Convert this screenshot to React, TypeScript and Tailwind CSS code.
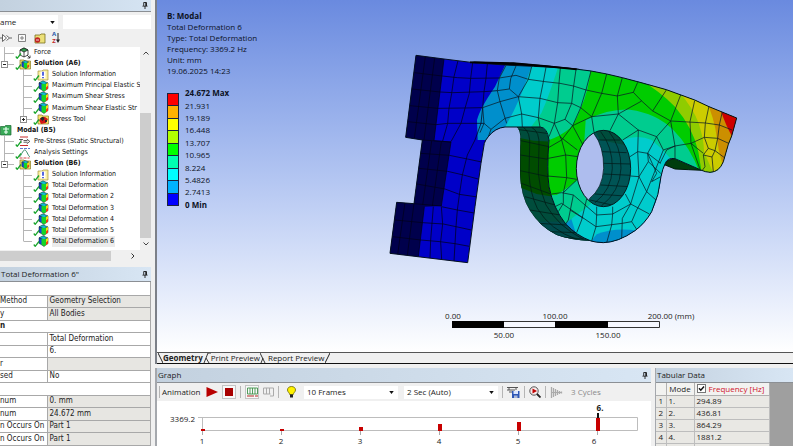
import React, { useState } from 'react';

const sans = "font-['Open_Sans','Noto_Sans',sans-serif]";

type IconKind = 'force' | 'solution' | 'info' | 'result' | 'tool' | 'modal' | 'prestress' | 'settings';

interface TreeNode {
  label: string;
  level: 0 | 1 | 2;
  icon: IconKind;
  expander?: 'open' | 'closed';
  bold?: boolean;
  selected?: boolean;
  last?: boolean;
}

const treeNodes: TreeNode[] = [
  { label: 'Force', level: 1, icon: 'force' },
  { label: 'Solution (A6)', level: 1, icon: 'solution', expander: 'open', bold: true, last: true },
  { label: 'Solution Information', level: 2, icon: 'info' },
  { label: 'Maximum Principal Elastic S', level: 2, icon: 'result' },
  { label: 'Maximum Shear Stress', level: 2, icon: 'result' },
  { label: 'Maximum Shear Elastic Str', level: 2, icon: 'result' },
  { label: 'Stress Tool', level: 2, icon: 'tool', expander: 'closed', last: true },
  { label: 'Modal (B5)', level: 0, icon: 'modal', bold: true },
  { label: 'Pre-Stress (Static Structural)', level: 1, icon: 'prestress' },
  { label: 'Analysis Settings', level: 1, icon: 'settings' },
  { label: 'Solution (B6)', level: 1, icon: 'solution', expander: 'open', bold: true, last: true },
  { label: 'Solution Information', level: 2, icon: 'info' },
  { label: 'Total Deformation', level: 2, icon: 'result' },
  { label: 'Total Deformation 2', level: 2, icon: 'result' },
  { label: 'Total Deformation 3', level: 2, icon: 'result' },
  { label: 'Total Deformation 4', level: 2, icon: 'result' },
  { label: 'Total Deformation 5', level: 2, icon: 'result' },
  { label: 'Total Deformation 6', level: 2, icon: 'result', selected: true, last: true },
];

const detailRows: { name: string; value?: string; group?: boolean; readOnly?: boolean }[] = [
  { name: '', group: true },
  { name: 'Method', value: 'Geometry Selection', readOnly: true },
  { name: 'y', value: 'All Bodies', readOnly: true },
  { name: 'n', group: true },
  { name: '', value: 'Total Deformation' },
  { name: '', value: '6.' },
  { name: 'r', value: '', readOnly: true },
  { name: 'sed', value: 'No' },
  { name: '', group: true },
  { name: 'num', value: '0. mm', readOnly: true },
  { name: 'num', value: '24.672 mm', readOnly: true },
  { name: 'n Occurs On', value: 'Part 1', readOnly: true },
  { name: 'n Occurs On', value: 'Part 1', readOnly: true },
  { name: '', group: true },
];

const legendColors = ['#ff0000', '#ffb200', '#ffff00', '#b2ff00', '#00ff00', '#00ffb2', '#00ffff', '#00b2ff', '#0000ff'];
const legendValues = ['24.672 Max', '21.931', '19.189', '16.448', '13.707', '10.965', '8.224', '5.4826', '2.7413', '0 Min'];

const modes = [
  ['1.', '294.89'],
  ['2.', '436.81'],
  ['3.', '864.29'],
  ['4.', '1881.2'],
  ['5.', '2877.8'],
];

const bars = [
  { x: 45, h: 2 },
  { x: 124, h: 2 },
  { x: 203, h: 4 },
  { x: 282, h: 7 },
  { x: 361, h: 9 },
  { x: 440, h: 13 },
];

const Pin = () => (
  <svg viewBox="0 0 7 8" className="h-[7px] w-[6px] shrink-0">
    <path d="M2 .5h3v4M2 .5v4" fill="none" stroke="#111" />
    <path d="M4 .5h1.5v4H4zM.5 4.2h6v1h-6zM3 5h1v3H3z" fill="#111" />
  </svg>
);

const Cube = ({ x = 0, y = 0, s = 1 }: { x?: number; y?: number; s?: number }) => (
  <g transform={`translate(${x} ${y}) scale(${s})`} stroke="#082018" strokeWidth=".5">
    <path d="M1 2.5 5 .5l5 2.2-4 2z" fill="#12b9cf" />
    <path d="M1 2.5 6 4.7V11L1 8z" fill="#1443d8" />
    <path d="M6 4.7l4-2v5.6L6 11z" fill="#ff9a00" />
    <path d="M3.5 3.6 8 3.7v6l-2 1.2-2.5-1.5z" fill="#16d426" stroke="none" />
    <path d="M8 3.7l2-1v3L8 7z" fill="#f2df17" stroke="none" />
    <path d="M8 7.2l2-1.4v2.5L8 9.8z" fill="#f03a12" stroke="none" />
  </g>
);

const Folder = () => <path d="M5 2h4l1 1h5.5v8H5z" fill="#f8e66a" stroke="#8a7a20" strokeWidth=".7" />;

const NodeIcon = ({ kind }: { kind: IconKind }) => (
  <svg viewBox="0 0 16 12" className="h-3 w-4 shrink-0">
    {kind === 'force' && (
      <g stroke="#222" strokeWidth=".8" fill="#fff">
        <path d="M5 3l4-2 4 2v5l-4 2-4-2z" />
        <path d="M5 3l4 2 4-2-4-2z" fill="#31a14e" />
        <path d="M9 5v5" fill="none" />
        <path d="M12 8l3 3M15 8.5V11h-2.5" fill="none" />
      </g>
    )}
    {kind === 'solution' && (
      <>
        <Folder />
        <Cube x={6} y={2} s={0.8} />
      </>
    )}
    {kind === 'info' && (
      <>
        <path d="M5 2h4l1-1h5v10H5z" fill="#f9f0a0" stroke="#a8963c" strokeWidth=".7" />
        <path d="M7.5 2.5h5v7h-5z" fill="#fff" />
        <path d="M10 2.8v4" stroke="#1b35d8" strokeWidth="1.5" />
        <path d="M10 8v1.2" stroke="#1b35d8" strokeWidth="1.5" />
      </>
    )}
    {kind === 'result' && <Cube x={5} y={0.3} />}
    {kind === 'tool' && (
      <>
        <Folder />
        <path d="M6 7l3-3h3l3 2-2 4-5 1z" fill="#d31616" />
        <path d="M7 5.5l3-2 1.5 2.5-2 2zM12 7h2v2h-2z" fill="#25262c" />
      </>
    )}
    {kind === 'modal' && (
      <>
        <path d="M2.500 2.500h4l1-1H13v9.500H2.500z" fill="#39a957" stroke="#176831" strokeWidth=".7" />
        <path d="M8 3v7M5 5h6M6 8h4" stroke="#e8fff0" strokeWidth="1.2" />
      </>
    )}
    {kind === 'prestress' && (
      <>
        <path d="M5 2h8M5 10.500h8" stroke="#c92c2c" />
        <path d="M4 4.500h4M6 4.500V8M8.500 5.500h4M8.500 7.200h4M11.800 4l3 2.400-3 2.400" fill="none" stroke="#333" strokeWidth=".8" />
      </>
    )}
    {kind === 'settings' && (
      <>
        <path d="M4.5 11h10" stroke="#c33" strokeWidth=".9" strokeDasharray="3 1" />
        <path d="M4.500 10C6 9 7.500 3.500 9.500 3S13 9 15 10" fill="none" stroke="#26805a" strokeWidth=".9" />
        <path d="M5 1.500h10" stroke="#4f6bc4" strokeWidth=".9" strokeDasharray="3 1" />
      </>
    )}
    {kind !== 'modal' && <path d="M.8 9.500 2.200 11.300 6 6.500" fill="none" stroke="#19a52c" strokeWidth="1.3" />}
  </svg>
);

const Guide = ({ node }: { node: TreeNode }) => {
  const x = node.level === 1 ? 4.5 : 23.5;
  const w = node.level === 1 ? 15 : 33;
  return (
    <svg viewBox={`0 0 ${w} 12`} width={w} height="12" className="block shrink-0">
      <path d={`M${x} 0V${node.last ? 6 : 12}M${x} 6.5H${w - 1}`} stroke="#b5b5b5" fill="none" />
      {node.expander && (
        <>
          <rect x={x - 3} y="3.5" width="6" height="6" fill="#fff" stroke="#8d8d8d" />
          <path d={`M${x - 1.5} 6.5h3${node.expander === 'closed' ? `M${x} 5v3` : ''}`} stroke="#222" />
        </>
      )}
    </svg>
  );
};

const TreeRow = ({ node }: { node: TreeNode }) => (
  <li className="flex min-h-0 items-center whitespace-nowrap">
    {node.level > 0 &&
      (node.expander ? (
        <button type="button" aria-label={node.label} className="shrink-0">
          <Guide node={node} />
        </button>
      ) : (
        <Guide node={node} />
      ))}
    <span className={node.level === 0 ? '-ml-[2px] flex' : 'flex'}>
      <NodeIcon kind={node.icon} />
    </span>
    <span className={`ml-[3px] pr-px ${node.bold ? 'font-bold' : ''} ${node.selected ? 'bg-[#ececec]' : ''}`}>{node.label}</span>
  </li>
);

const TitleBar = ({ title, pin = true }: { title: string; pin?: boolean }) => (
  <div className="flex h-[15px] shrink-0 items-center justify-between border-b border-[#8b8f94] bg-linear-to-r from-[#c3d1df] to-[#d8e6f4] pr-[3px] pl-px text-[8px] whitespace-nowrap text-[#222]">
    <span>{title}</span>
    {pin && <Pin />}
  </div>
);

const OutlinePanel = () => (
  <section className="flex flex-col">
    <div className="flex h-3 items-center justify-end border-b border-[#8b8f94] bg-linear-to-r from-[#c3d1df] to-[#d5e4f3] px-[3px] pb-px">
      <Pin />
    </div>
    <div className="flex gap-[5px] pt-[3px]">
      <label className="flex h-[14px] w-[58px] items-center justify-between bg-white pr-[3px]">
        <select aria-label="Filter" className="w-full appearance-none bg-transparent text-[8px] leading-3 text-[#222]">
          <option>ame</option>
        </select>
        <svg viewBox="0 0 6 4" className="h-[3px] w-[5px] shrink-0">
          <path d="M0 0h6L3 4z" fill="#111" />
        </svg>
      </label>
      <input aria-label="Search" className="h-[14px] min-w-0 flex-1 bg-white px-1 text-[8px]" />
    </div>
    <div className="flex h-[18px] items-center gap-[6px]">
      <button type="button" aria-label="Collapse">
        <svg viewBox="0 0 12 10" className="h-[10px] w-3">
          <path d="M0 5h3M2.500 1.500l4 3.500-4 3.500zM6.500 2.500l3 2.500-3 2.500M9.500 5H12" fill="#fff" stroke="#555" strokeWidth=".9" />
        </svg>
      </button>
      <button type="button" aria-label="Expand all">
        <svg viewBox="0 0 8 8" className="h-2 w-2">
          <path d="M.5.5h7v7h-7zM2 4h4M4 2v4" fill="#fafafa" stroke="#777" strokeWidth=".9" />
        </svg>
      </button>
      <button type="button" aria-label="Hide folders" className="ml-[2px]">
        <svg viewBox="0 0 12 11" className="h-[11px] w-3">
          <path d="M1 2h5l1-1h4v9H1z" fill="#ece078" stroke="#79701f" strokeWidth=".8" />
          <circle cx="3.500" cy="7" r="2.700" fill="#c12222" />
          <path d="M2 7h3" stroke="#fff" strokeWidth=".8" />
        </svg>
      </button>
      <button type="button" aria-label="Sort" className="flex items-center text-[6px] leading-[7px] font-bold">
        <span className="flex flex-col">
          <span className="text-[#2456a8]">A</span>
          <span className="text-[#c02424]">Z</span>
        </span>
        <svg viewBox="0 0 4 10" className="h-[10px] w-1">
          <path d="M2 0v8" stroke="#222" />
          <path d="M0 6.500h4L2 10z" fill="#222" />
        </svg>
      </button>
    </div>
    <div className="flex bg-white">
      <ul className="grid h-[203px] min-w-0 flex-1 auto-rows-fr overflow-hidden pb-[3px] font-['DejaVu_Sans_Condensed','DejaVu_Sans',sans-serif] text-[7px] leading-[11px] text-[#111]">
        {treeNodes.map((node, i) => (
          <TreeRow key={i} node={node} />
        ))}
      </ul>
      <div className="flex w-[11px] shrink-0 flex-col items-center bg-[#f0f0f0] pt-1 pb-1">
        <svg viewBox="0 0 6 4" className="h-1 w-[6px]">
          <path d="M.5 3.500 3 1l2.500 2.500" fill="none" stroke="#444" />
        </svg>
        <div className="mt-[58px] mb-1 w-full flex-1 bg-[#cdcdcd]" />
        <svg viewBox="0 0 6 4" className="h-1 w-[6px]">
          <path d="M.5.500 3 3l2.500-2.500" fill="none" stroke="#444" />
        </svg>
      </div>
    </div>
    <div className="flex h-[11px] items-center gap-5 bg-[#f0f0f0]">
      <div className="h-[10px] w-[111px] bg-[#cdcdcd]" />
      <svg viewBox="0 0 4 6" className="h-[6px] w-1">
        <path d="M.5.500 3 3 .5 5.500" fill="none" stroke="#333" />
      </svg>
    </div>
  </section>
);

const DetailsPanel = () => (
  <section className="mt-[6px] flex min-h-0 flex-1 flex-col overflow-hidden">
    <TitleBar title={'Total Deformation 6"'} />
    <table className="w-full table-fixed border-collapse bg-white font-['DejaVu_Sans_Condensed','DejaVu_Sans',sans-serif] text-[8px] leading-[10px] text-[#222]">
      <colgroup>
        <col className="w-[47px]" />
        <col />
      </colgroup>
      <tbody>
        {detailRows.map((row, i) => (
          <tr key={i} className="odd:h-[13px] even:h-3">
            <th
              colSpan={row.group ? 2 : 1}
              className={`border-r border-b border-[#a8a8a8] p-0 text-left whitespace-nowrap ${row.group ? 'font-bold' : 'font-normal'}`}
            >
              {row.name}
            </th>
            {!row.group && (
              <td className={`border-r border-b border-[#a8a8a8] p-0 pl-[2px] whitespace-nowrap ${row.readOnly ? 'bg-[#e7e6e2]' : ''}`}>
                {row.value}
              </td>
            )}
          </tr>
        ))}
      </tbody>
    </table>
  </section>
);

const facePath =
  'M108 46 192 57 280 68 375 75 460 79 540 83Q585 86 633 93 680 101 727 113L780 127 859 149 944 180 987 200 1070 234 1055 288 1045 313 1030 365Q1018 396 990 397 975 396 965 391L885 356Q862 352 855 372 848 385 843 410 838 465 815 515 795 550 765 572 715 607 670 608 645 607 633 603 590 587 557 552 520 505 507 440 500 390 507 300 502 262 480 261H375Q345 264 325 290 316 300 313 310L303 370 285 500 263 668 30 640 50 487 102 491 127 300 77 292Z';

const Mesh = ({ d, color = '#0a1a24' }: { d: string; color?: string }) => (
  <path d={d} fill="none" stroke={color} strokeWidth="2.200" strokeLinejoin="round" />
);

const Model = () => (
  <g transform="translate(380 40) scale(.33333)">
    <defs>
      <clipPath id="face">
        <path d={facePath} />
      </clipPath>
      <clipPath id="arm">
        <path d="M410 261Q424 270 421 320L420 400Q422 470 450 512 480 560 530 585 570 600 633 603L640 560 540 420 520 280 480 255Z" />
      </clipPath>
      <clipPath id="bore">
        <ellipse cx="670.500" cy="385.500" rx="81.500" ry="114.500" />
      </clipPath>
    </defs>

    {/* thickness seen behind the face */}
    <path d="M270 64 400 67 500 76 600 86 540 88 380 82Z" fill="#000" />
    <g clipPath="url(#arm)">
      <path d="M400 250H650V610H400z" fill="#004d3c" />
      <path d="M400 290 460 302 520 305V470L470 462 415 440z" fill="#004c00" />
      <path d="M470 545 560 545 640 590V610H470z" fill="#004a4c" />
      <Mesh
        color="#001a14"
        d="M410 261Q424 270 421 320L420 400Q422 470 450 512 480 560 530 585 570 600 633 603M430 262Q452 275 449 320L447 400Q450 460 472 505 510 570 590 598M455 262Q480 275 477 320L475 400Q478 450 498 495 535 560 610 598M410 268 500 280M422 302 507 320M421 345 505 358M420 392 505 410M424 430 512 462M435 470 525 495M450 510 540 525M475 550 560 555M510 575 590 578M550 592 620 598"
      />
    </g>
    <path d="M853 374 862 362 885 355 967 391 925 389 885 387Z" fill="#003d0d" stroke="#001a08" strokeWidth="3" />

    <g clipPath="url(#face)">
      <path d="M0 0H1100V700H0z" fill="#0000c8" />
      <path d="M108 46 192 57 162 302 213 306 184 498 133 500 115 650 0 640V0z" fill="#00004c" />
      <path d="M378 70 345 140Q300 205 291 240L293 300H330L600 700H1100V0H378z" fill="#008fcc" />
      <path d="M457 70Q430 155 400 215L375 262 500 300 600 620H1100V70z" fill="#00cccc" />
      <path d="M538 70Q510 160 484 220L450 265 490 310 510 600H560L555 553 585 528Q620 505 645 480L700 380 727 300Q775 282 815 300 845 325 868 352L1000 430 1100 70z" fill="#00cc8f" />
      <path d="M633 80Q628 150 600 210 590 240 570 265 540 290 500 303V466L530 465 560 445 595 418 612 320 617 240Q690 205 750 209 830 220 880 270 930 320 960 400H1100V70z" fill="#00cc00" />
      <path d="M775 115Q840 155 885 200 940 265 955 335L967 410H1100V70z" fill="#8fcc00" />
      <path d="M893 150Q940 205 956 250 972 300 972 335L1000 400 1100 380V80z" fill="#cccc00" />
      <path d="M978 180Q1003 235 1010 290 1015 335 1028 375L1100 350V150z" fill="#cc8f00" />
      <path d="M1020 205Q1038 260 1058 292L1100 280V180z" fill="#cc0000" />
      <path d="M620 620 650 583Q700 562 775 572L760 630H630z" fill="#008fcc" />

      {/* left leg */}
      <Mesh
        color="#00001c"
        d="M136 50 103 295M164 54 132 299M192 57 162 302H162M103 98 186 108M96 147 180 156M90 197 173 205M84 245 168 254M127 300 213 306 184 498M155 303 128 495M184 305 157 498M122 340 208 346M117 385 203 394M110 432 195 447M102 491 184 498M75 488 53 643M102 490 82 646M133 500 115 650M45 540 128 548M38 590 122 600M234 62 222 110 215 160 207 205 203 250 188 303M278 68 272 115 268 160 255 205 243 250 213 305M322 72 318 115 312 155 308 203 303 250 285 300 262 345 247 405 238 465 232 510 228 560 222 664M186 108 232 113 272 115 358 114M180 156 218 158 312 155 352 152M173 205 255 204 308 203M168 254 203 250 243 250 312 250M162 302 213 306M208 346 262 357 305 366M203 394 250 405 298 418M195 447 238 463 292 471M184 500 232 510 282 519M128 548 190 552 228 560 274 570M122 600 180 605 225 611 268 619M160 500 152 600 150 655M184 500 188 552 182 605 185 660"
      />
      {/* neck */}
      <Mesh d="M378 76 358 114 352 152 360 185 380 250M408 78 392 116 388 147 415 170 425 222 427 261M455 80 445 118 415 170M352 152 388 147M358 114 408 106 445 118 495 125 540 130 580 138 618 150 665 160 712 168 760 157M308 203 360 185 415 170 480 175 533 188 575 190 602 203 635 230M498 82 490 125 480 175 475 233 480 261M541 84 537 130 533 188 523 250M588 89 580 145 575 190 555 238M308 203 312 250 333 268 375 235 425 222 475 233 523 250 555 238 578 257M312 250 300 278M333 268 325 290M523 250 507 290M523 250 545 300 557 345 560 412M507 322 545 300 578 257 635 230M505 355 557 345 594 350M502 408 560 413 590 418M540 290 592 330M578 257 608 313M633 93 618 150 602 203 578 257" />
      {/* head */}
      <Mesh d="M680 102 665 160 635 230 642 276M727 113 712 168 715 222 775 270M773 127 760 157 785 183 818 213 872 243 976 249 1018 255 1056 270M785 183 715 222 635 230M859 150 818 213M902 165 872 243M944 182 930 245 933 310M987 198 976 250 973 292 985 325 1005 332M1027 215 1018 255 1013 295 1005 332 1032 352M885 318 933 310 973 292 1013 295 1048 311M933 310 970 340M872 243 885 318V356M872 243 830 290 803 340 805 365 777 410 752 408M985 325 970 345 975 380 967 391M970 345 996 351 1005 332M996 351 1000 395M933 310 960 388M885 318 860 330 840 370" />
      {/* ring */}
      <Mesh d="M775 270 728 300M775 270 830 290 850 330 885 318M715 222 690 272M775 270 773 335 750 350M773 335 803 340 842 370M773 335 777 410 752 492M805 365 842 400M850 330 828 385 800 455 770 510 755 545M777 410 800 455 830 482M736 462 752 492 808 522M752 492 727 535 725 598M752 492 698 522 650 525 580 465 545 458 515 462M755 545 727 550 648 560 545 490 525 500M650 500V525L648 560 635 603M698 500V522L695 555 680 608M620 477 605 540 590 578M580 465 565 540 557 552M590 420 550 458 560 413M550 458 550 490 535 515M755 545 770 568M803 340 830 400 815 425 842 410M610 535 570 510" />
    </g>
    <path d={facePath} fill="none" stroke="#04101c" strokeWidth="3" />

    {/* bore */}
    <g clipPath="url(#bore)">
      <path d="M580 260H760V510H580z" fill="#005455" />
      <path d="M640 262 660 300 760 320V260z" fill="#004d3c" />
      <path d="M560 260 642 281Q672 320 671 385 668 445 628 476L600 510H560z" fill="#aebdee" />
      <Mesh color="#001c1c" d="M642 281Q672 320 671 385 668 445 628 476M662 275Q698 320 697 385 695 450 645 488M685 272Q724 320 723 385 720 455 664 498M655 300 720 300M667 335 740 338M671 370 752 372M671 402 752 406M662 435 748 440M645 462 735 468M630 480 700 496" />
    </g>
    <ellipse cx="670.500" cy="385.500" rx="81.500" ry="114.500" fill="none" stroke="#04181c" strokeWidth="3" />
    <path d="M270 67 400 71 500 79 590 88" fill="none" stroke="#000" strokeWidth="5" />
  </g>
);

const Ruler = () => (
  <g>
    <path d="M452.500 321.500h207v6h-207z" fill="#f6f8ff" stroke="#333" />
    <path d="M452 321h52v7h-52zM555 321h53v7h-53z" fill="#000" />
    <g className="text-[8px]" fill="#1a1a1a" textAnchor="middle">
      <text x="453" y="319">0.00</text>
      <text x="555" y="319">100.00</text>
      <text x="504" y="338">50.00</text>
      <text x="608" y="338">150.00</text>
      <text x="671" y="319">200.00 (mm)</text>
    </g>
  </g>
);

const Viewport = () => (
  <div className="flex min-h-0 flex-1 bg-linear-to-b from-[#6a8adf] to-white text-[8px] text-[#0c1224]">
    <div className="w-[143px] shrink-0 pt-[10px] pl-[10px] whitespace-nowrap">
      <div className="leading-[11px]">
        <p className="font-bold">B: Modal</p>
        <p>Total Deformation 6</p>
        <p>Type: Total Deformation</p>
        <p>Frequency: 3369.2 Hz</p>
        <p>Unit: mm</p>
        <p>19.06.2025 14:23</p>
      </div>
      <div className="mt-[11px] flex gap-[6px]">
        <div className="mt-[6px] grid h-[113px] w-3 auto-rows-fr border-t border-[#1b2340]">
          {legendColors.map((color) => (
            <div key={color} className="border-x border-b border-[#1b2340]" style={{ backgroundColor: color }} />
          ))}
        </div>
        <ul className="grid h-[124px] auto-rows-fr items-center leading-3">
          {legendValues.map((value, i) => (
            <li key={value} className={i === 0 || i === 9 ? 'font-bold' : ''}>
              {value}
            </li>
          ))}
        </ul>
      </div>
    </div>
    <svg viewBox="300 0 493 352" className="h-full min-w-0 flex-1">
      <Model />
      <Ruler />
    </svg>
  </div>
);

const ViewTabs = () => {
  const [tab, setTab] = useState('Geometry');
  return (
    <div className="flex h-3 shrink-0 border-t border-b border-t-[#555] border-b-[#111] bg-[#f0f0f0] pl-px text-[8px] leading-[10px] text-[#222]">
      {['Geometry', 'Print Preview', 'Report Preview'].map((name, i) => (
        <React.Fragment key={name}>
          {i === 0 ? (
            <svg viewBox="0 0 5 10" className="h-[10px] w-[5px]">
              <path d="M0 0 5 10" stroke="#222" />
            </svg>
          ) : (
            <svg viewBox="0 0 8 10" className="h-[10px] w-2">
              <path d={i === 1 ? 'M5 0 1 10M3 5l3 5M5 0h3' : 'M0 0l5 10M3 5 1 10'} stroke="#222" fill="none" strokeWidth=".9" />
            </svg>
          )}
          <button type="button" onClick={() => setTab(name)} className={`whitespace-nowrap ${tab === name ? 'font-bold' : ''}`}>
            {name}
          </button>
        </React.Fragment>
      ))}
      <svg viewBox="0 0 5 10" className="h-[10px] w-[5px]">
        <path d="M5 0 0 10" stroke="#222" />
      </svg>
    </div>
  );
};

const Divider = () => <span className="mx-1 h-3 w-px shrink-0 bg-[#b5b5b5]" />;

const Combo = ({ label, value, width }: { label: string; value: string; width: string }) => (
  <label className={`flex h-[13px] items-center bg-white pr-1 ${width}`}>
    <select aria-label={label} className="w-full appearance-none bg-transparent pl-[3px] text-[8px] leading-3">
      <option>{value}</option>
    </select>
    <svg viewBox="0 0 6 4" className="h-[3px] w-[5px] shrink-0">
      <path d="M0 0h6L3 4z" fill="#111" />
    </svg>
  </label>
);

const AnimationBar = () => (
  <div className="flex h-[18px] shrink-0 items-center overflow-hidden bg-[#f0f0f0] pl-[2px] text-[8px] whitespace-nowrap text-[#222]">
    <span className="mr-[2px] h-3 w-px bg-[#b5b5b5]" />
    <span className="w-[44px]">Animation</span>
    <button type="button" aria-label="Play">
      <svg viewBox="0 0 12 10" className="h-[10px] w-3">
        <path d="M.5 0 12 5 .5 10z" fill="#b80000" />
      </svg>
    </button>
    <button type="button" aria-label="Stop" className="ml-1 flex h-[14px] w-[14px] items-center justify-center border border-[#c4c4c4] bg-[#f8f8f8]">
      <span className="h-2 w-2 bg-[#a80000]" />
    </button>
    <Divider />
    <button type="button" aria-label="Distributed" className="flex h-[14px] w-[14px] items-center justify-center border border-[#c4c4c4] bg-[#f8f8f8]">
      <svg viewBox="0 0 11 10" className="h-[10px] w-[11px]">
        <path d="M.5 1v6M3 1v6M5.500 1v6M8 1v6M10.500 1v6M.5 1h10M.5 7h10" stroke="#40924b" strokeWidth=".9" />
        <path d="M0 9h7M8 9h3" stroke="#b32222" />
      </svg>
    </button>
    <button type="button" aria-label="Result sets" className="ml-1">
      <svg viewBox="0 0 11 10" className="h-[10px] w-[11px]">
        <path d="M.5 1v6M3.500 1v6M6.500 1v6M10.500 1v8M.5 1h10M.5 7h7M7 9h3.500" stroke="#aaa" fill="none" />
      </svg>
    </button>
    <Divider />
    <button type="button" aria-label="Hint" className="mr-2 ml-1">
      <svg viewBox="0 0 9 12" className="h-3 w-[9px]">
        <path d="M4.500.5C7 .5 8.500 2 8.500 4S6.500 6.500 6.300 8.500H2.700C2.500 6.500.5 6 .5 4s1.500-3.500 4-3.500z" fill="#fff200" stroke="#6b6400" strokeWidth=".8" />
        <path d="M3 8.500h3v3H3z" fill="#222" />
      </svg>
    </button>
    <Combo label="Frames" value="10 Frames" width="w-[94px]" />
    <span className="w-[6px]" />
    <Combo label="Duration" value="2 Sec (Auto)" width="w-[94px]" />
    <Divider />
    <button type="button" aria-label="Export video">
      <svg viewBox="0 0 13 12" className="h-3 w-[13px]">
        <path d="M0 1.500h11M2 1v3M9 1v3M2 6h3M0 4h8" stroke="#555" />
        <path d="M5 5h7.500v7H5z" fill="#2e57b5" />
        <path d="M6.500 5h4.500v3H6.500z" fill="#dbe6ff" />
        <path d="M7 9.500h3.500V12H7z" fill="#aab8d8" />
      </svg>
    </button>
    <Divider />
    <button type="button" aria-label="Zoom to fit">
      <svg viewBox="0 0 12 12" className="h-3 w-3">
        <circle cx="5" cy="5" r="4.200" fill="#f6e9e9" stroke="#555" />
        <path d="M3.500 2.500 8 5 3.500 7.500z" fill="#c00000" />
        <path d="M8 8l3.500 3.500" stroke="#222" strokeWidth="1.800" />
      </svg>
    </button>
    <Divider />
    <svg viewBox="0 0 13 12" className="h-3 w-[13px] shrink-0">
      <path d="M1.500 1v11M3.500 2v9M5.500 3v7M7.500 4v5M9.500 5v3M11.500 5.500v2" stroke="#aaa" strokeWidth="1.300" />
      <path d="M1 6.500h11" stroke="#aaa" />
    </svg>
    <span className="ml-2 text-[#8a8a8a]">3 Cycles</span>
  </div>
);

const FrequencyChart = () => (
  <svg viewBox="0 0 494 45" className="w-full shrink-0 bg-white text-[8px]" fill="#222">
    <path d="M41 16.500h439.500v13H45.500v-13" fill="none" stroke="#bdbdbd" />
    <text x="13" y="21">3369.2</text>
    {bars.map((bar, i) => (
      <g key={bar.x}>
        <path d={`M${bar.x + 0.5} 30v4`} stroke="#aaa" />
        {i === 5 && <path d="M441 12v18" stroke="#111" strokeWidth="2" />}
        <rect x={bar.x - 1} y={30 - bar.h} width="4" height={bar.h} fill="#c80000" />
        <text x={i === 5 ? 437 : bar.x} y="43" textAnchor="middle">
          {i + 1}
        </text>
      </g>
    ))}
    <text x="443" y="10" textAnchor="middle" className="font-bold">
      6.
    </text>
  </svg>
);

const TabularData = () => {
  const [shown, setShown] = useState(true);
  return (
    <section className="flex min-w-0 flex-1 flex-col border-l border-[#a5a8ad]">
      <TitleBar title="Tabular Data" pin={false} />
      <div className="flex min-h-0 flex-1 items-start overflow-hidden bg-[#9f9f9f]">
        <table className="border-collapse bg-[#e9e8e4] text-[8px] leading-[10px] text-[#222]">
          <thead>
            <tr className="h-3 bg-[#f2f2f0]">
              <th className="w-[10px] border-r border-b border-[#b0b0b0] p-0" />
              <th className="w-7 border-r border-b border-[#b0b0b0] p-0 text-center font-normal">Mode</th>
              <th className="w-[75px] border-r border-b border-[#b0b0b0] p-0 text-left font-normal">
                <label className="flex items-center gap-[3px] pl-[2px] whitespace-nowrap text-[#d0142c]">
                  <span className="relative flex">
                    <input
                      type="checkbox"
                      checked={shown}
                      onChange={() => setShown(!shown)}
                      className="h-[9px] w-[9px] appearance-none border border-[#777] bg-white"
                    />
                    {shown && (
                      <svg viewBox="0 0 9 9" className="pointer-events-none absolute inset-0 h-[9px] w-[9px]">
                        <path d="M2 4.300 3.800 6.300 7 2.500" fill="none" stroke="#111" strokeWidth="1.400" />
                      </svg>
                    )}
                  </span>
                  Frequency [Hz]
                </label>
              </th>
            </tr>
          </thead>
          <tbody>
            {modes.map(([mode, frequency], i) => (
              <tr key={mode} className="h-3">
                <td className="border-r border-b border-[#bdbdbd] p-0 text-center">{i + 1}</td>
                <td className="border-r border-b border-[#bdbdbd] p-0 pl-[2px]">{mode}</td>
                <td className="border-r border-b border-[#bdbdbd] p-0 pl-[2px]">{frequency}</td>
              </tr>
            ))}
          </tbody>
        </table>
      </div>
    </section>
  );
};

const App: React.FC = () => {
  return (
    <div className={`flex h-screen overflow-hidden bg-[#f0f0f0] ${sans}`}>
      <aside className="flex w-[151px] shrink-0 flex-col overflow-hidden">
        <OutlinePanel />
        <DetailsPanel />
      </aside>

      <main className="ml-1 flex min-w-0 flex-1 flex-col">
        <div className="flex min-h-0 flex-1 flex-col border-l-2 border-[#7c8088]">
          <Viewport />
          <ViewTabs />
        </div>
        <div className="mt-1 flex h-[78px] shrink-0">
          <section className="flex min-w-0 flex-1 flex-col border-l-2 border-[#a5a8ad] bg-white">
            <TitleBar title="Graph" />
            <AnimationBar />
            <FrequencyChart />
          </section>
          <div className="ml-1 flex w-[138px] shrink-0">
            <TabularData />
          </div>
        </div>
      </main>
    </div>
  );
};

export default App;
